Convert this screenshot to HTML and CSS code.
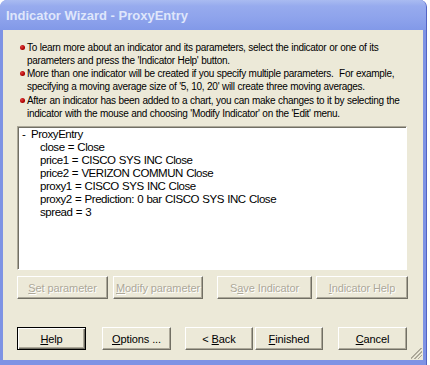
FILE: index.html
```html
<!DOCTYPE html>
<html>
<head>
<meta charset="utf-8">
<link rel="stylesheet" href="styles.css">
</head>
<body>
<div class="window">
  <div class="titlebar"><span class="title">Indicator Wizard - ProxyEntry</span></div>
  <div class="client">
    <ul class="notes">
      <li><span class="dot"></span><span>To learn more about an indicator and its parameters, select the indicator or one of its<br>parameters and press the 'Indicator Help' button.</span></li>
      <li><span class="dot"></span><span>More than one indicator will be created if you specify multiple parameters.&nbsp; For example,<br>specifying a moving average size of '5, 10, 20' will create three moving averages.</span></li>
      <li class="last"><span class="dot"></span><span>After an indicator has been added to a chart, you can make changes to it by selecting the<br>indicator with the mouse and choosing 'Modify Indicator' on the 'Edit' menu.</span></li>
    </ul>
    <div class="listbox">
      <div class="root"><span class="minus">-</span>ProxyEntry</div>
      <div class="child">close = Close</div>
      <div class="child">price1 = CISCO SYS INC Close</div>
      <div class="child">price2 = VERIZON COMMUN Close</div>
      <div class="child">proxy1 = CISCO SYS INC Close</div>
      <div class="child">proxy2 = Prediction: 0 bar CISCO SYS INC Close</div>
      <div class="child">spread = 3</div>
    </div>
    <div class="row params">
      <button class="btn disabled w-set"><u>S</u>et parameter</button>
      <button class="btn disabled w-mod"><u>M</u>odify parameter</button>
      <button class="btn disabled w-save">S<u>a</u>ve Indicator</button>
      <button class="btn disabled w-help2"><u>I</u>ndicator Help</button>
    </div>
    <div class="row actions">
      <button class="btn default w-help"><u>H</u>elp</button>
      <button class="btn w-opt"><u>O</u>ptions ...</button>
      <button class="btn w-back">&lt; <u>B</u>ack</button>
      <button class="btn w-fin"><u>F</u>inished</button>
      <button class="btn w-cancel"><u>C</u>ancel</button>
    </div>
    <div class="grip"></div>
  </div>
</div>
</body>
</html>
```
FILE: styles.css
```css
html, body {
  margin: 0;
  padding: 0;
  background: #ffffff;
}
body {
  width: 430px;
  height: 365px;
  overflow: hidden;
  font-family: "Liberation Sans", sans-serif;
}
.window {
  width: 427px;
  height: 365px;
  box-sizing: border-box;
  display: flex;
  flex-direction: column;
  background: #7e93e4;
  border-radius: 7px 7px 0 0;
  border-right: 1px solid #5264c4;
  overflow: hidden;
}
.titlebar {
  height: 30px;
  flex: none;
  display: flex;
  align-items: center;
  padding-left: 6px;
  background: linear-gradient(to bottom, #a9bbf1 0%, #97abee 20%, #8ea3ec 60%, #8299e8 100%);
}
.title {
  font-family: "Liberation Sans", sans-serif;
  font-weight: bold;
  font-size: 13px;
  color: #dfe6fb;
  letter-spacing: 0;
  padding-top: 1px;
}
.client {
  position: relative;
  margin: 0 3px 5px 3px;
  flex: 1;
  background: #ece9d8;
  padding: 11px 0 0 14px;
  box-sizing: border-box;
}
.notes {
  list-style: none;
  margin: 0;
  padding: 0;
  font-family: "Liberation Sans", sans-serif;
  font-size: 10px;
  letter-spacing: -0.3px;
  word-spacing: 0.3px;
  line-height: 13px;
  color: #000;
  white-space: nowrap;
}
.notes li {
  display: flex;
  align-items: flex-start;
}
.notes li.last {
  margin-top: 1px;
}
.dot {
  flex: none;
  width: 5px;
  height: 5px;
  border-radius: 50%;
  background: radial-gradient(circle at 35% 35%, #e04040 0%, #b00000 60%, #700000 100%);
  margin: 4px 2px 0 3px;
}
.listbox {
  margin-top: 6px;
  width: 390px;
  height: 144px;
  box-sizing: border-box;
  background: #fff;
  border-top: 1px solid #aca899;
  border-left: 1px solid #aca899;
  border-right: 1px solid #fff;
  border-bottom: 1px solid #fff;
  box-shadow: inset 1px 1px 0 #716f64;
  padding: 1px 0 0 4px;
  font-family: "Liberation Sans", sans-serif;
  font-size: 11.5px;
  letter-spacing: -0.45px;
  word-spacing: 0.5px;
  line-height: 13px;
  color: #000;
}
.root .minus {
  display: inline-block;
  width: 9px;
}
.child {
  padding-left: 18px;
}
.row {
  display: flex;
}
.params {
  margin-top: 6px;
}
.actions {
  margin-top: 28px;
}
.btn {
  height: 23px;
  box-sizing: border-box;
  padding: 0;
  font-family: "Liberation Sans", sans-serif;
  font-size: 11px;
  letter-spacing: -0.1px;
  color: #000;
  background: #ece9d8;
  border: 1px solid;
  border-color: #fff #716f64 #716f64 #fff;
  box-shadow: inset -1px -1px 0 #aca899;
  text-align: center;
}
.btn.disabled {
  color: #aca899;
  text-shadow: 1px 1px 0 #fff;
}
.btn.default {
  border: 1px solid #000;
  box-shadow: inset 1px 1px 0 #fff, inset -1px -1px 0 #716f64, inset -2px -2px 0 #aca899;
}
.w-set { width: 91px; }
.w-mod { width: 90px; margin-left: 5px; }
.w-save { width: 95px; margin-left: 14px; }
.w-help2 { width: 92px; margin-left: 4px; }
.w-help { width: 69px; }
.w-opt { width: 69px; margin-left: 16px; }
.w-back { width: 68px; margin-left: 14px; }
.w-fin { width: 68px; margin-left: 2px; }
.w-cancel { width: 69px; margin-left: 15px; }
.grip {
  position: absolute;
  right: 1px;
  bottom: 1px;
  width: 11px;
  height: 11px;
  background: linear-gradient(135deg, transparent 0 45%, #aca899 45% 52%, transparent 52% 62%, #aca899 62% 69%, transparent 69% 79%, #aca899 79% 86%, transparent 86%);
}
```
